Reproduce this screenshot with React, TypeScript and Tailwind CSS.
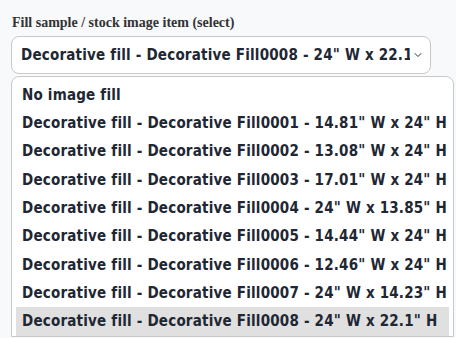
import React from 'react';
import { ChevronDown } from 'lucide-react';

const options = [
  'No image fill',
  'Decorative fill - Decorative Fill0001 - 14.81" W x 24" H',
  'Decorative fill - Decorative Fill0002 - 13.08" W x 24" H',
  'Decorative fill - Decorative Fill0003 - 17.01" W x 24" H',
  'Decorative fill - Decorative Fill0004 - 24" W x 13.85" H',
  'Decorative fill - Decorative Fill0005 - 14.44" W x 24" H',
  'Decorative fill - Decorative Fill0006 - 12.46" W x 24" H',
  'Decorative fill - Decorative Fill0007 - 24" W x 14.23" H',
  'Decorative fill - Decorative Fill0008 - 24" W x 22.1" H',
];

const selected = 8;

export default function App() {
  return (
    <div className="w-[456px] h-[338px] overflow-hidden bg-[#f8f9fb] pl-[11px] pt-[14px]">
      <label className="block pl-px text-[14px] font-bold text-[#333] font-['Liberation_Serif',serif] leading-[18px]">
        Fill sample / stock image item (select)
      </label>
      <div className="mt-[4px] w-[420px] h-[38px] rounded-[8px] border border-[#c8c8c8] bg-white flex items-center pl-[9px] pr-[6px] font-['DejaVu_Sans_Condensed','DejaVu_Sans',sans-serif] font-bold text-[15px] tracking-[0.2px] text-[#1e2733]">
        <span className="flex-1 whitespace-nowrap overflow-hidden">{options[selected]}</span>
        <ChevronDown size={12} strokeWidth={2} className="text-[#333] ml-[2px]" />
      </div>
      <div className="mt-[2px] w-[443px] rounded-tl-[8px] rounded-tr-[8px] border border-[#c8c8c8] bg-white pt-[4px] px-[4px] font-['DejaVu_Sans_Condensed','DejaVu_Sans',sans-serif] font-bold text-[15px] tracking-[0.2px] text-[#1e2733]">
        {options.map((o, i) => (
          <div
            key={i}
            className={`h-[28.3px] flex items-center pl-[6px] whitespace-nowrap ${i === selected ? 'bg-[#e0e0e0]' : ''}`}
          >
            {o}
          </div>
        ))}
      </div>
    </div>
  );
}
